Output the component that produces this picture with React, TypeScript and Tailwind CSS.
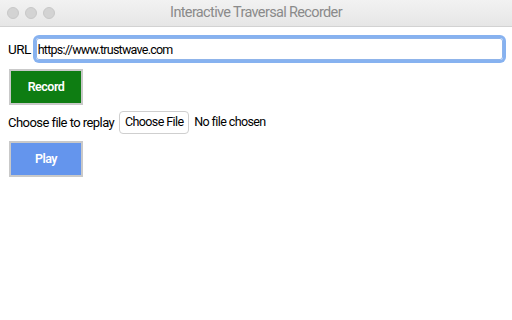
export default function App() {
  return (
    <div className="w-[512px] h-[320px] bg-white overflow-hidden" style={{ fontFamily: 'Roboto, "Liberation Sans", Arial, sans-serif' }}>
      <div className="h-[27px] flex items-center relative bg-gradient-to-b from-[#f2f2f2] to-[#e6e6e6] border-b border-[#d2d2d2]">
        <div className="flex gap-[6px] pl-[7px]">
          <span className="w-3 h-3 rounded-full bg-[#d3d3d3] border border-[#c8c8c8]" />
          <span className="w-3 h-3 rounded-full bg-[#d3d3d3] border border-[#c8c8c8]" />
          <span className="w-3 h-3 rounded-full bg-[#d3d3d3] border border-[#c8c8c8]" />
        </div>
        <div className="absolute inset-0 flex items-center justify-center text-[14.5px] tracking-[-0.65px] text-[#8a8a8a]">
          Interactive Traversal Recorder
        </div>
      </div>

      <div className="px-2 pt-[11px] text-[13px] tracking-[-0.55px] text-black">
        <div className="flex items-center gap-[5px] h-[22px]">
          <span className="text-[13.5px]">URL</span>
          <input
            defaultValue="https://www.trustwave.com"
            className="flex-1 mr-[1px] h-[22px] px-[1px] text-[12.5px] tracking-[-0.75px] border border-[#8fb4ea] rounded-[3px] outline-none shadow-[0_0_0_3px_#87b2f0]"
          />
        </div>
        <button className="block mt-[9px] ml-[1px] w-[74px] h-[36px] bg-[#0e7d12] border-2 border-[#c9c9c9] text-white text-[12.5px] font-semibold tracking-[-0.5px]">
          Record
        </button>
        <div className="flex items-center gap-[5px] mt-[6px] h-[23px]">
          <span>Choose file to replay</span>
          <button className="h-[23px] w-[70px] bg-white border border-[#cfcfcf] rounded-[4px] text-[12.5px] tracking-[-0.6px]">Choose File</button>
          <span className="text-[12.5px] tracking-[-0.6px]">No file chosen</span>
        </div>
        <button className="block mt-[7px] ml-[1px] w-[74px] h-[36px] bg-[#6495ed] border-2 border-[#c9c9c9] text-white text-[12.5px] font-semibold tracking-[-0.5px]">
          Play
        </button>
      </div>
    </div>
  );
}
